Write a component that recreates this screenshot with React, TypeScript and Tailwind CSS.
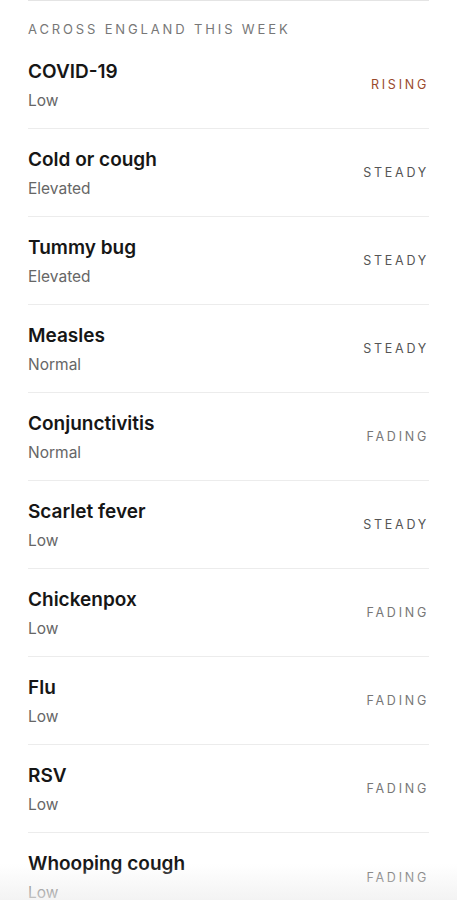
const rows = [
  { name: "COVID-19", level: "Low", trend: "RISING" },
  { name: "Cold or cough", level: "Elevated", trend: "STEADY" },
  { name: "Tummy bug", level: "Elevated", trend: "STEADY" },
  { name: "Measles", level: "Normal", trend: "STEADY" },
  { name: "Conjunctivitis", level: "Normal", trend: "FADING" },
  { name: "Scarlet fever", level: "Low", trend: "STEADY" },
  { name: "Chickenpox", level: "Low", trend: "FADING" },
  { name: "Flu", level: "Low", trend: "FADING" },
  { name: "RSV", level: "Low", trend: "FADING" },
  { name: "Whooping cough", level: "Low", trend: "FADING" },
];

const trendColor: Record<string, string> = {
  RISING: "text-[#9a4a2c]",
  STEADY: "text-[#555]",
  FADING: "text-[#777]",
};

export default function App() {
  return (
    <div className="relative h-[900px] overflow-hidden bg-white font-['Inter',sans-serif]">
      <div className="mx-[28px] border-t border-[#e4e4e4]">
        <div className="pt-[18px] pb-[2px] text-[13px] leading-[20px] tracking-[0.22em] text-[#777]">
          ACROSS ENGLAND THIS WEEK
        </div>
        {rows.map((r, i) => (
          <div
            key={r.name}
            className={"flex items-center justify-between h-[88px] " + (i < rows.length - 1 ? "border-b border-[#ececec]" : "")}
          >
            <div className="flex flex-col pt-[2px]">
              <div className="text-[19px] leading-[24px] font-semibold text-[#161616]">{r.name}</div>
              <div className="mt-[6px] text-[15.5px] leading-[22px] text-[#666]">{r.level}</div>
            </div>
            <div className={"mt-[2px] text-[12.5px] tracking-[0.22em] " + trendColor[r.trend]}>{r.trend}</div>
          </div>
        ))}
      </div>
      <div className="pointer-events-none absolute bottom-0 left-0 right-0 h-[36px] bg-gradient-to-b from-transparent to-[#eeeeee]/70" />
    </div>
  );
}
